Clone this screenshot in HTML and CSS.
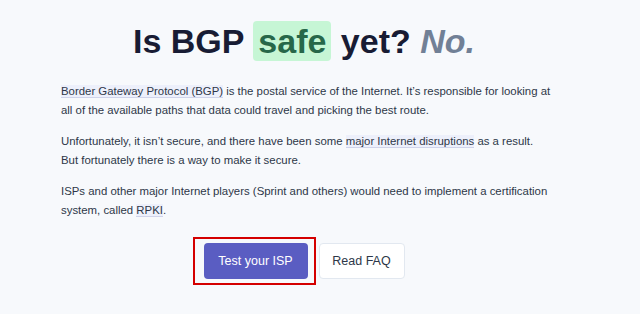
FILE: index.html
```html
<!DOCTYPE html>
<html lang="en">
<head>
<meta charset="utf-8">
<title>Is BGP safe yet?</title>
<link rel="stylesheet" href="styles.css">
</head>
<body>
<main class="page">
  <h1 class="title">Is BGP <span class="safe">safe</span> yet? <em class="no">No.</em></h1>
  <p class="text"><a class="link" href="#">Border Gateway Protocol (BGP)</a> is the postal service of the Internet. It’s responsible for looking at all of the available paths that data could travel and picking the best route.</p>
  <p class="text">Unfortunately, it isn’t secure, and there have been some <a class="link" href="#">major Internet disruptions</a> as a result. But fortunately there is a way to make it secure.</p>
  <p class="text">ISPs and other major Internet players (Sprint and others) would need to implement a certification system, called <a class="link" href="#">RPKI</a>.</p>
  <div class="actions">
    <div class="mark"><a class="btn btn-primary" href="#">Test your ISP</a></div>
    <a class="btn btn-secondary" href="#">Read FAQ</a>
  </div>
</main>
</body>
</html>
```
FILE: styles.css
```css
html, body {
  margin: 0;
  padding: 0;
  background: #f7f9fc;
}
body {
  font-family: "Liberation Sans", Arial, sans-serif;
  color: #2d3748;
}
.page {
  width: 486px;
  margin-left: 61px;
  padding-top: 22px;
}
.title {
  margin: 0 0 22px;
  font-family: "Liberation Sans", Arial, sans-serif;
  font-size: 34px;
  font-weight: 700;
  line-height: 38px;
  color: #181c34;
  text-align: center;
}
.safe {
  background: #c6f6d5;
  color: #276749;
  border-radius: 4px;
  padding: 1px 5px;
}
.no {
  color: #718096;
  font-style: italic;
}
.text {
  margin: 0 -6px 12px 0;
  font-size: 11.4px;
  line-height: 19px;
}
.link {
  color: inherit;
  text-decoration: none;
  background: #edf0fb;
  border-bottom: 1px solid #cfd3ea;
}
.actions {
  display: flex;
  align-items: center;
  justify-content: center;
  margin-top: 17px;
  padding-right: 11px;
}
.mark {
  border: 2px solid #d40000;
  padding: 4px 6px 4px 9px;
}
.btn {
  display: block;
  font-size: 12.5px;
  text-decoration: none;
  border-radius: 4px;
  line-height: 16px;
  white-space: nowrap;
}
.btn-primary {
  background: #5a5dc2;
  color: #ffffff;
  padding: 10px 0;
  width: 104px;
  text-align: center;
}
.btn-secondary {
  margin-left: 3px;
  background: #ffffff;
  color: #2d3748;
  border: 1px solid #e2e8f0;
  padding: 9px 0;
  width: 84px;
  text-align: center;
}
```
